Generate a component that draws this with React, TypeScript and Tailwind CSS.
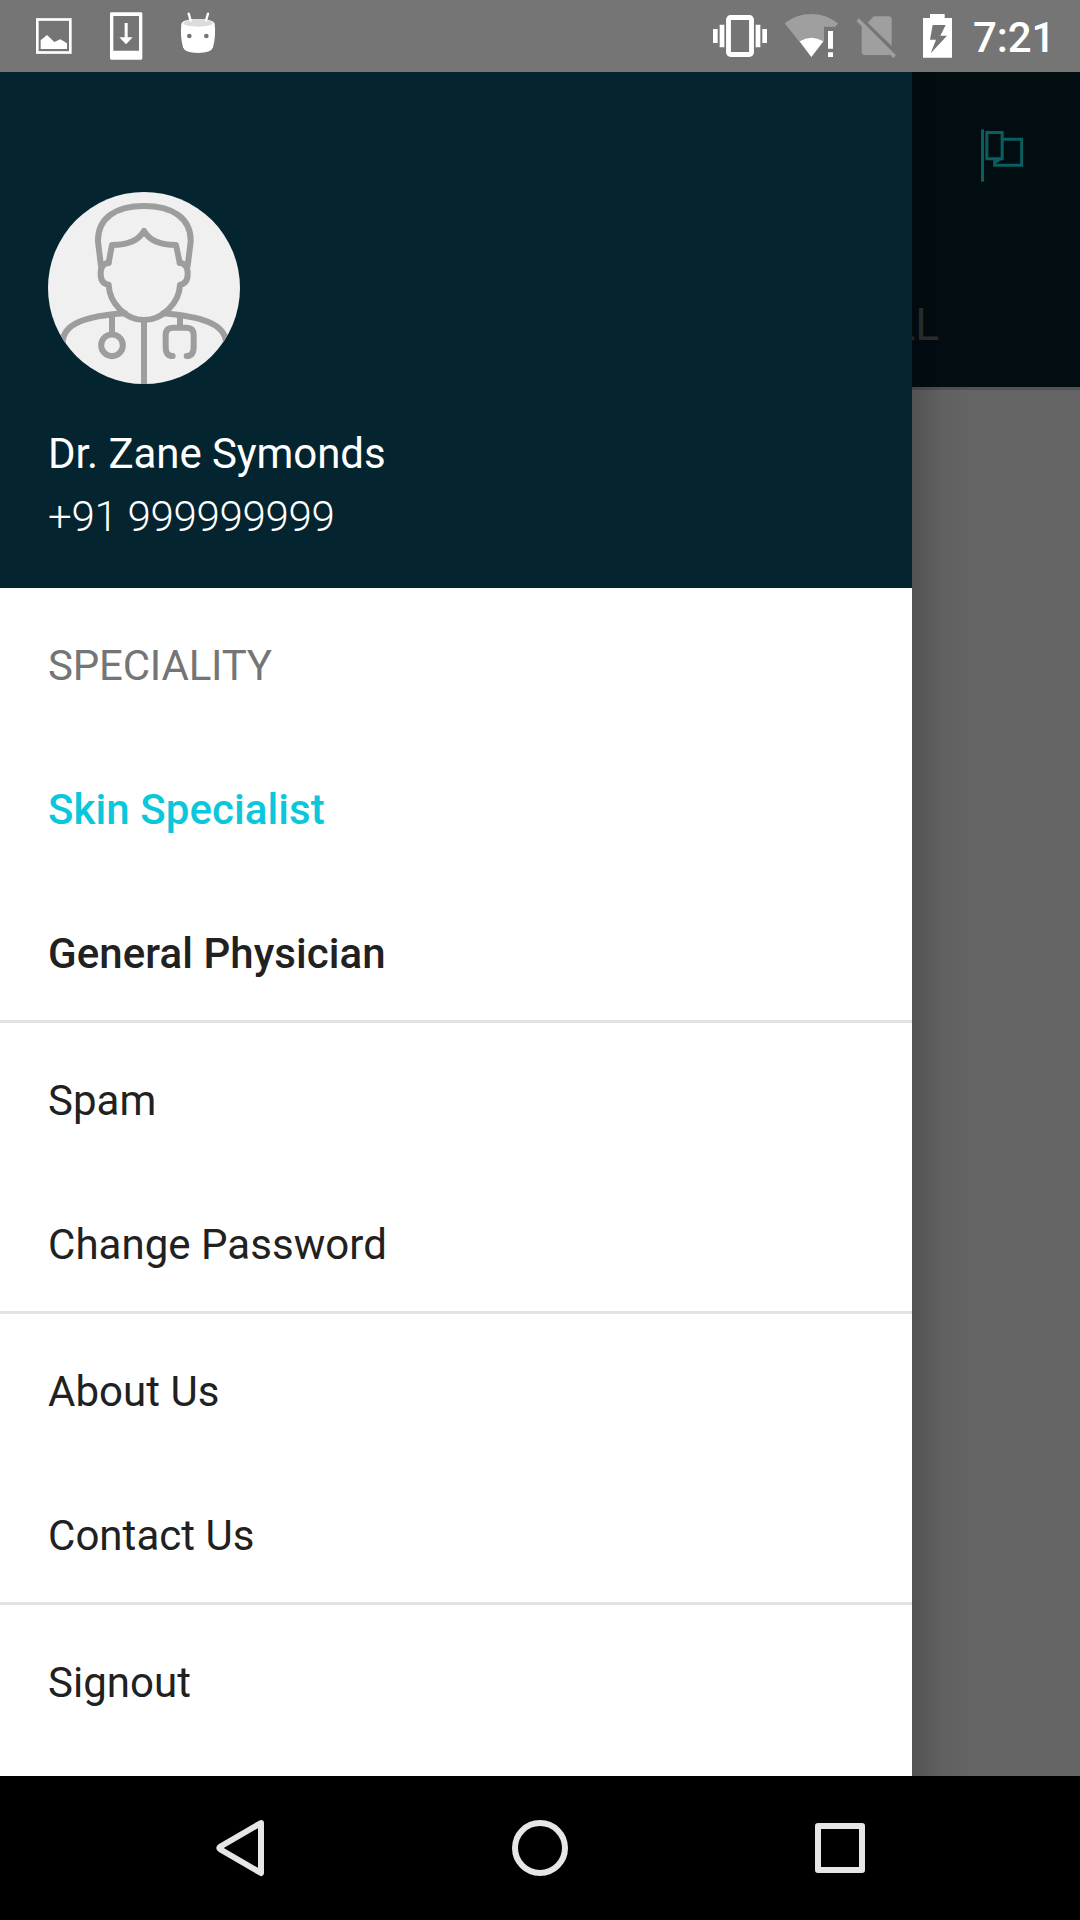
import type { ReactNode } from 'react';

function StatusBar() {
  return (
    <header className="flex h-[72px] w-full bg-[#757575]">
      <svg className="h-[72px] w-[260px] shrink-0" viewBox="0 0 780 216">
        <rect x="112" y="58.500" width="99" height="99" fill="none" stroke="#fff" strokeWidth="8" />
        <path d="M122 147V121L141 105L163 126L181 118L201 130V147Z" fill="#fff" />
        <path fillRule="evenodd" d="M334 37H423Q427 37 427 41V175Q427 179 423 179H334Q330 179 330 175V41Q330 37 334 37ZM340 48V152H417V48Z" fill="#fff" />
        <path d="M374 69H383V112H398L378 133L358 112H374Z" fill="#fff" />
        <path d="M544 72Q548 57 594 57Q640 57 644 72Q648 108 639 142Q634 159 594 159Q554 159 549 142Q540 108 544 72Z" fill="#fff" />
        <path d="M549 70Q556 57 594 57Q632 57 640 70Q632 80 594 80Q556 80 549 70Z" fill="#dcdcdc" />
        <path d="M566 41L572 62M624 41L618 62" stroke="#fff" strokeWidth="7" strokeLinecap="round" />
        <circle cx="568" cy="108" r="7" fill="#757575" />
        <circle cx="619" cy="108" r="7" fill="#757575" />
      </svg>
      <div className="flex-1" />
      <svg className="h-[72px] w-[270px] shrink-0" viewBox="0 0 810 216">
        <rect x="115.500" y="52.500" width="69" height="111" rx="6" fill="none" stroke="#fff" strokeWidth="14.500" />
        <path d="M69 87H83V129H69ZM89 74H103V142H89ZM197 74H211V142H197ZM217 87H231V129H217Z" fill="#fff" />
        <path d="M284 70Q320 42 364 42Q408 42 444 70L436 80H402V123L364 171Z" fill="#9f9f9f" />
        <path d="M329 124Q364 102 400 124L364 171Z" fill="#fff" />
        <path d="M414 93H429V146H414ZM414 157H429V171H414Z" fill="#fff" />
        <path d="M551 49H597Q605 49 605 57V138L533 68Z" fill="#9f9f9f" />
        <path d="M499 63L507 55L618 166L610 174L601 165H524Q515 165 515 156V79Z" fill="#9f9f9f" />
        <path fillRule="evenodd" d="M720 42H764V54H786V173H699V54H720ZM728 75L720 119H738L722 160L771 107H751L767 75Z" fill="#fff" />
      </svg>
      <time className="w-[120px] pl-[13px] text-[42px] leading-[75px] font-medium tracking-[-0.1px] text-white">7:21</time>
    </header>
  );
}

function FlagIcon() {
  return (
    <svg className="h-[56px] w-[46px]" viewBox="300 174 138 168" fill="none" stroke="#095f5f" strokeWidth="9">
      <path d="M307.500 178V335" />
      <path d="M320.500 187.500H366.500V266H320.500ZM370 208H425V286H344V268" />
      <path d="M340 267H369L349 280Z" fill="#095f5f" stroke="none" />
    </svg>
  );
}

function DoctorAvatar() {
  return (
    <svg className="size-48 rounded-full bg-[#f0f0f0]" viewBox="54 36 576 576" fill="none" stroke="#9d9d9d" strokeWidth="18" strokeLinecap="round" strokeLinejoin="round">
      <path d="M213 258L204 185C202 112 260 78 342 78C424 78 484 112 482 185L473 258" />
      <path d="M236 247L246 195C292 195 326 182 342 153C358 182 392 195 438 195L449 247" />
      <path d="M236 249C218 249 212 263 212 282C212 300 219 312 236 314C238 370 288 420 342 420C396 420 448 370 450 314C466 312 473 300 473 282C473 263 467 249 449 249" />
      <path d="M342 420V612" strokeLinecap="butt" />
      <path d="M285 400C170 408 97 430 98 490M400 400C510 410 588 430 588 490" />
      <path d="M246 407V460M450 407V440" />
      <circle cx="246" cy="496" r="32.500" />
      <path d="M428 528C411 528 407 515 407 500V465Q407 443 429 443H469Q491 443 491 465V500C491 515 487 528 470 528" />
    </svg>
  );
}

type RowProps = { children: ReactNode; className?: string };

function Row({ children, className = 'tracking-[0.04px] text-[#212121]' }: RowProps) {
  return <li className={`flex h-36 shrink-0 items-center px-12 pt-[10px] ${className}`}>{children}</li>;
}

function Divider() {
  return <li className="h-[3px] shrink-0 bg-[#e3e3e3]" />;
}

function Drawer() {
  return (
    <aside className="absolute inset-y-0 left-0 flex w-[912px] flex-col bg-white">
      <div className="flex h-[516px] shrink-0 flex-col bg-[#04242f] px-12 pt-[120px] text-white">
        <DoctorAvatar />
        <p className="mt-[39px] leading-[62px] tracking-[-0.08px]">Dr. Zane Symonds</p>
        <p className="leading-[63px] font-light tracking-[-0.28px]">+91 999999999</p>
      </div>
      <ul className="flex min-h-0 flex-1 flex-col overflow-hidden">
        <Row className="tracking-[-0.2px] text-[#757575]">SPECIALITY</Row>
        <Row className="font-medium tracking-[0.07px] text-[#0bc7db]">Skin Specialist</Row>
        <Row className="font-medium tracking-[0.07px] text-[#212121]">General Physician</Row>
        <Divider />
        <Row>Spam</Row>
        <Row>Change Password</Row>
        <Divider />
        <Row>About Us</Row>
        <Row>Contact Us</Row>
        <Divider />
        <Row>Signout</Row>
      </ul>
      <div className="absolute inset-y-0 left-full w-[60px] bg-linear-to-r from-black/18 via-black/5 to-transparent" />
    </aside>
  );
}

function NavBar() {
  return (
    <nav className="flex h-36 items-center justify-center gap-[220px] bg-black">
      {[
        <path key="back" d="M20.500 38.500Q18 40 20.500 41.500L61 65V15Z" />,
        <circle key="home" cx="40" cy="40" r="25" />,
        <rect key="recent" x="18" y="18" width="44" height="44" />,
      ].map((shape) => (
        <svg key={shape.key} className="size-20" viewBox="0 0 80 80" fill="none" stroke="#e6e6e6" strokeWidth="6" strokeLinejoin="round">
          {shape}
        </svg>
      ))}
    </nav>
  );
}

export default function App() {
  return (
    <div className="flex h-[1920px] w-[1080px] flex-col overflow-hidden font-[Roboto,sans-serif] text-[42px]">
      <StatusBar />
      <main className="relative flex min-h-0 flex-1 flex-col bg-[#656565]">
        <div className="flex h-[315px] shrink-0 flex-col items-end bg-[#020d12]">
          <div className="flex h-[171px] w-full justify-end pt-[56px] pr-[54px]">
            <FlagIcon />
          </div>
          <div className="h-36 w-full pr-[141px] text-right text-[44px] leading-[164px] text-[#303030]">ALL</div>
        </div>
        <div className="h-[3px] bg-[#525252]" />
        <Drawer />
      </main>
      <NavBar />
    </div>
  );
}
